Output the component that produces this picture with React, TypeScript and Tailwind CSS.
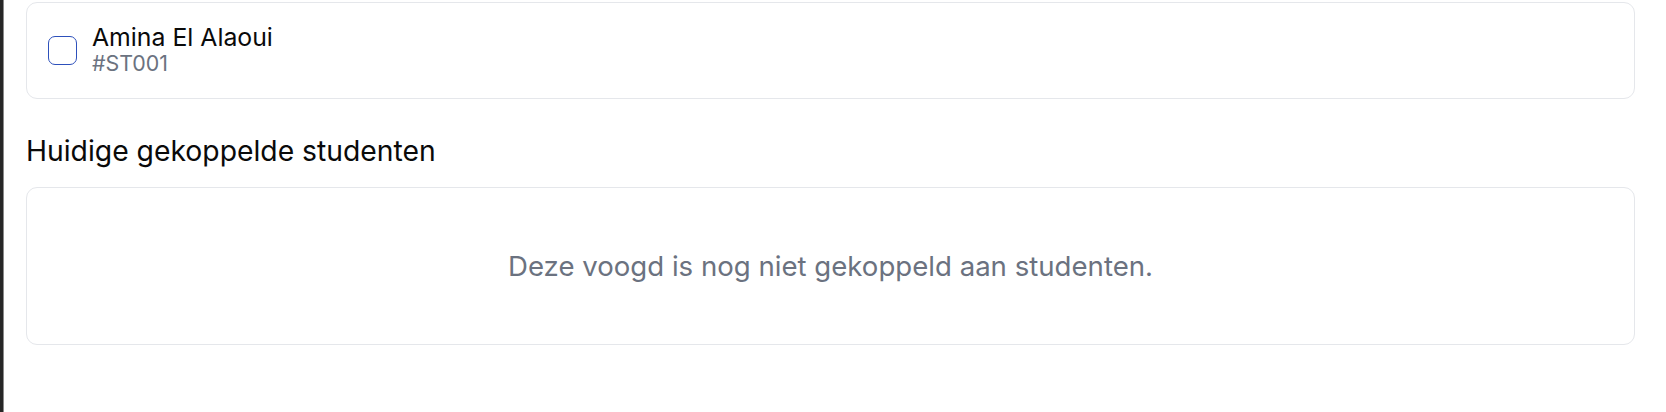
import React from "react";

export default function App() {
  return (
    <div
      className="flex h-[412px] w-[1666px] overflow-hidden bg-white"
      style={{ fontFamily: "Inter, 'Noto Sans', sans-serif" }}
    >
      <div className="h-full w-[3px] bg-[#262626]" />
      <div className="h-full w-px bg-[#8a8a8a]" />
      <div className="flex flex-1 flex-col pl-[22px] pr-[31px] pt-[2px]">
        <div className="flex h-[97px] items-center rounded-[11px] border border-[#e5e7eb] pl-[21px]">
          <div className="h-[29px] w-[29px] shrink-0 rounded-[7px] border-[1.6px] border-[#2d50bb] bg-white" />
          <div className="ml-[15px] flex flex-col pb-[4px]">
            <span className="text-[24.8px] leading-[28px] text-[#0a0a0a]">Amina El Alaoui</span>
            <span className="text-[21.4px] leading-[24px] text-[#6b7280]">#ST001</span>
          </div>
        </div>
        <h2 className="mt-[31px] text-[28.3px] font-normal leading-[42px] text-[#0a0a0a]">
          Huidige gekoppelde studenten
        </h2>
        <div className="mt-[15px] flex h-[158px] items-center justify-center rounded-[11px] border border-[#e5e7eb]">
          <p className="text-[27.6px] leading-[40px] text-[#6b7280]">
            Deze voogd is nog niet gekoppeld aan studenten.
          </p>
        </div>
      </div>
    </div>
  );
}
